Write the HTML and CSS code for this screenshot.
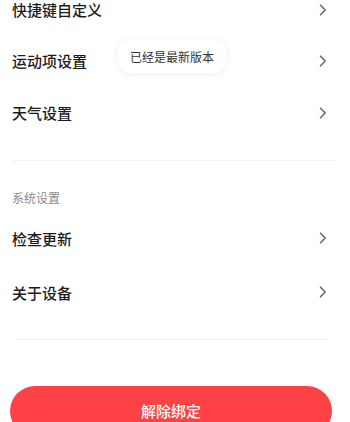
FILE: index.html
```html
<!DOCTYPE html>
<html lang="zh">
<head>
<meta charset="utf-8">
<link rel="stylesheet" href="styles.css">
</head>
<body>
<div class="page">
  <div class="group first">
    <div class="row top"><span class="label">快捷键自定义</span><svg class="chev" viewBox="0 0 8 12"><path d="M1.5 1.2 L6.2 6 L1.5 10.8"/></svg></div>
    <div class="row"><span class="label">运动项设置</span><svg class="chev" viewBox="0 0 8 12"><path d="M1.5 1.2 L6.2 6 L1.5 10.8"/></svg></div>
    <div class="row"><span class="label">天气设置</span><svg class="chev" viewBox="0 0 8 12"><path d="M1.5 1.2 L6.2 6 L1.5 10.8"/></svg></div>
  </div>
  <div class="divider"></div>
  <div class="section-title">系统设置</div>
  <div class="group second">
    <div class="row"><span class="label">检查更新</span><svg class="chev" viewBox="0 0 8 12"><path d="M1.5 1.2 L6.2 6 L1.5 10.8"/></svg></div>
    <div class="row"><span class="label">关于设备</span><svg class="chev" viewBox="0 0 8 12"><path d="M1.5 1.2 L6.2 6 L1.5 10.8"/></svg></div>
  </div>
  <div class="divider last"></div>
  <button class="unbind">解除绑定</button>
</div>
<div class="toast">已经是最新版本</div>
</body>
</html>
```

FILE: styles.css
```css
html, body {
  margin: 0;
  padding: 0;
  background: #ffffff;
  overflow: hidden;
  height: 422px;
}
body {
  font-family: "Noto Sans CJK SC", "Noto Sans", sans-serif;
  color: #1f1f1f;
  position: relative;
}
.page {
  display: flex;
  flex-direction: column;
}
.group.second {
  margin-top: 4px;
}
.row {
  height: 52px;
  display: flex;
  align-items: center;
  justify-content: space-between;
  padding: 0 23px 0 12px;
}
.row.top {
  height: 34.5px;
  align-items: flex-start;
}
.row.top .label {
  line-height: 20px;
}
.row.top .chev {
  margin-top: 4px;
}
.group.second .row {
  height: 54px;
}
.label {
  font-size: 15px;
  font-weight: 500;
  color: #1c1c1c;
}
.chev {
  width: 8px;
  height: 12px;
  fill: none;
  stroke: #6a6a6a;
  stroke-width: 1.6;
  stroke-linecap: round;
  stroke-linejoin: round;
}
.divider {
  height: 1px;
  background: #f3f3f3;
  margin: 21.5px 14px 0 12px;
}
.divider.last {
  margin: 20px 20px 0 16px;
}
.section-title {
  font-size: 12px;
  color: #8a8a8a;
  padding: 28px 12px 0;
  line-height: 18px;
}
.unbind {
  margin: 46px 18px 0 10px;
  height: 50px;
  flex-shrink: 0;
  border: none;
  border-radius: 25px;
  background: #fd4145;
  color: #ffffff;
  font-family: "Noto Sans CJK SC", "Noto Sans", sans-serif;
  font-size: 15px;
  font-weight: 500;
  padding: 0;
  line-height: 50px;
}
.toast {
  position: absolute;
  left: 118px;
  top: 40px;
  width: 108px;
  height: 33px;
  border-radius: 12px;
  background: #ffffff;
  box-shadow: 0 1px 10px rgba(0, 0, 0, 0.07);
  font-size: 12px;
  color: #333;
  display: flex;
  align-items: center;
  justify-content: center;
}
```
